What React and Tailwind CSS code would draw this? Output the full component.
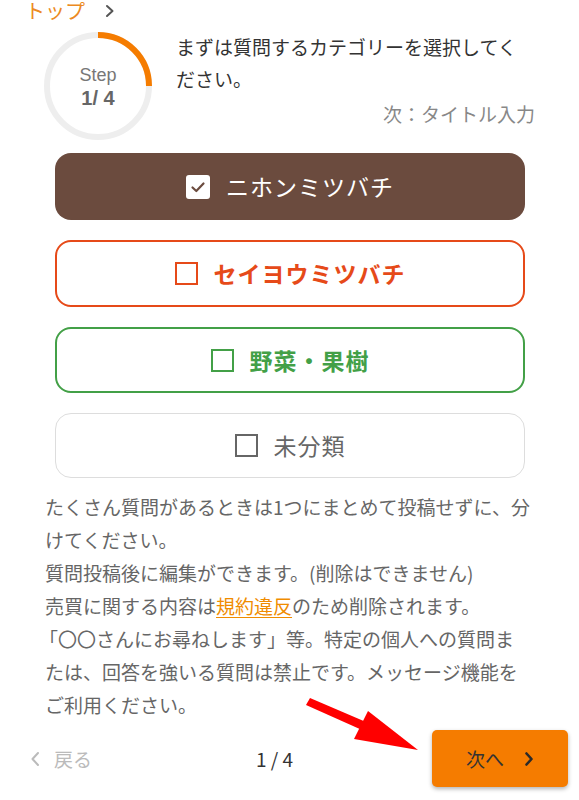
import React from "react";

const jp = { fontFamily: '"Noto Sans CJK JP", "Noto Sans", sans-serif' };

function Check({ checked, color }) {
  if (checked) {
    return (
      <span className="flex h-[24px] w-[24px] items-center justify-center rounded-[3px] bg-white">
        <svg width="16" height="16" viewBox="0 0 16 16">
          <polyline points="2.5,8.5 6.3,12 13.5,4.5" fill="none" stroke="#6b4b3e" strokeWidth="2.2" strokeLinecap="round" strokeLinejoin="round" />
        </svg>
      </span>
    );
  }
  return <span className="block h-[23px] w-[23px] border-2" style={{ borderColor: color }} />;
}

function Option({ label, checked, className, textClass, boxColor, h }) {
  return (
    <div className={`flex items-center justify-center rounded-[16px] ${h} ${className}`}>
      <div className="flex items-center gap-[16px]">
        <Check checked={checked} color={boxColor} />
        <span className={`text-[23px] leading-none tracking-[1px] ${textClass}`}>{label}</span>
      </div>
    </div>
  );
}

export default function App() {
  return (
    <div className="relative h-[800px] w-[579px] overflow-hidden bg-white" style={jp}>
      {/* breadcrumb */}
      <div className="-mt-[1px] flex h-[24px] items-center pl-[25px]">
        <span className="text-[20px] leading-[24px] text-[#ec8a22]">トップ</span>
        <svg className="ml-[20px]" width="10" height="14" viewBox="0 0 10 14">
          <polyline points="2,2 7.5,7 2,12" fill="none" stroke="#555" strokeWidth="2" strokeLinecap="round" strokeLinejoin="round" />
        </svg>
      </div>

      {/* step header */}
      <div className="mt-[8px] flex pl-[43px]">
        <div className="relative h-[110px] w-[110px] shrink-0">
          <svg width="110" height="110" viewBox="0 0 110 110" className="absolute inset-0">
            <circle cx="55" cy="55" r="51" fill="none" stroke="#eeeeee" strokeWidth="6" />
            <path d="M55 4 A51 51 0 0 1 106 55" fill="none" stroke="#f57c00" strokeWidth="6" />
          </svg>
          <div className="absolute inset-0 flex flex-col items-center justify-center pt-[2px]" style={{ fontFamily: '"Liberation Sans", Arial, sans-serif' }}>
            <span className="text-[18px] leading-[22px] text-[#777]">Step</span>
            <span className="text-[20px] font-bold leading-[24px] text-[#666]">1/ 4</span>
          </div>
        </div>
        <div className="ml-[23px] w-[359px]">
          <p className="text-[19px] leading-[32px] text-[#333]">まずは質問するカテゴリーを選択してください。</p>
          <p className="mt-[3px] text-right text-[19px] leading-[32px] text-[#888]">次：タイトル入力</p>
        </div>
      </div>

      {/* options */}
      <div className="ml-[55px] mt-[12px] flex w-[470px] flex-col gap-[20px]">
        <Option label="ニホンミツバチ" checked h="h-[67px]" className="bg-[#6b4b3e]" textClass="text-white" />
        <Option label="セイヨウミツバチ" h="h-[67px]" boxColor="#e64a19" className="border-2 border-[#e64a19] bg-white" textClass="font-bold text-[#e64a19]" />
        <Option label="野菜・果樹" h="h-[66px]" boxColor="#43a047" className="border-2 border-[#43a047] bg-white" textClass="font-bold text-[#43a047]" />
        <Option label="未分類" h="h-[65px]" boxColor="#666" className="border border-[#dddddd] bg-white" textClass="text-[#666]" />
      </div>

      {/* notes */}
      <div className="ml-[45px] mt-[12px] text-[19px] leading-[33px] text-[#666]">
        <p>たくさん質問があるときは1つにまとめて投稿せずに、分<br />けてください。</p>
        <p>質問投稿後に編集ができます。(削除はできません)</p>
        <p>
          売買に関する内容は<span className="text-[#f08c00] underline decoration-[#f08c00] underline-offset-[3px]">規約違反</span>のため削除されます。
        </p>
        <p className="-ml-[6px]">「〇〇さんにお尋ねします」等。特定の個人への質問ま<br /><span className="ml-[6px]">たは、回答を強いる質問は禁止です。メッセージ機能を</span><br /><span className="ml-[6px]">ご利用ください。</span></p>
      </div>

      {/* footer */}
      <div className="mt-[9px] flex h-[57px] items-center pl-[30px] pr-[11px]">
        <div className="flex w-[70px] items-center gap-[14px] text-[#bbbbbb]">
          <svg width="10" height="16" viewBox="0 0 10 16">
            <polyline points="8,2 2.5,8 8,14" fill="none" stroke="#bbbbbb" strokeWidth="2" strokeLinecap="round" strokeLinejoin="round" />
          </svg>
          <span className="text-[19px] leading-none">戻る</span>
        </div>
        <span className="ml-[156px] text-[19px] leading-none text-[#333]">1 / 4</span>
        <button className="ml-auto flex h-[57px] w-[136px] items-center justify-center gap-[20px] rounded-[5px] bg-[#f57c00] shadow-[0_2px_4px_rgba(0,0,0,0.3)]">
          <span className="text-[19px] leading-none text-[#333]">次へ</span>
          <svg width="10" height="16" viewBox="0 0 10 16">
            <polyline points="2.5,2.5 7.5,8 2.5,13.5" fill="none" stroke="#2a2a2a" strokeWidth="2.6" strokeLinecap="round" strokeLinejoin="round" />
          </svg>
        </button>
      </div>

      {/* annotation arrow */}
      <svg className="pointer-events-none absolute left-0 top-0" width="579" height="800" viewBox="0 0 579 800">
        <polygon points="306,705 310,698 366,722 362,730" fill="#ff0000" />
        <polygon points="368,711 418,750 354,739" fill="#ff0000" />
      </svg>
    </div>
  );
}
